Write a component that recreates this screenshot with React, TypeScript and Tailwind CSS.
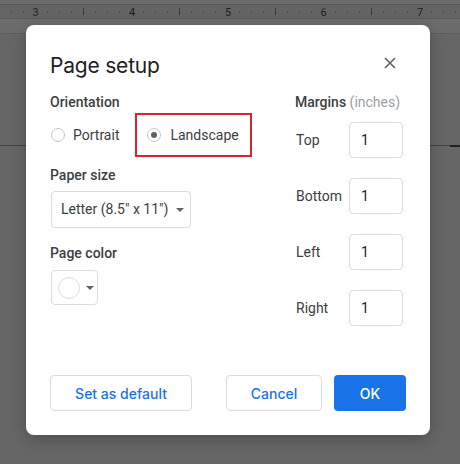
import React from "react";

const ticks: number[] = [];
for (let i = -4; i < 42; i++) ticks.push(i);

function Ruler() {
  const nums = [
    { x: 35.5, n: "3" },
    { x: 132, n: "4" },
    { x: 228, n: "5" },
    { x: 323.5, n: "6" },
    { x: 420, n: "7" },
  ];
  return (
    <svg width="460" height="13" className="block">
      {ticks.map((i) => {
        const x = 35.5 + i * 12;
        const k = ((i % 8) + 8) % 8;
        if (k === 0) return null;
        if (k === 4)
          return <line key={i} x1={x} x2={x} y1={3} y2={10} stroke="#3a3a3a" strokeWidth={1} />;
        return <line key={i} x1={x} x2={x} y1={6} y2={8} stroke="#4a4a4a" strokeWidth={1} />;
      })}
      {nums.map((d) => (
        <text
          key={d.n}
          x={d.x}
          y={11}
          textAnchor="middle"
          fontSize="11"
          fontFamily="Roboto, sans-serif"
          fill="#1e1e1e"
        >
          {d.n}
        </text>
      ))}
    </svg>
  );
}

function Radio({ checked }: { checked?: boolean }) {
  return (
    <span className="flex h-[14px] w-[14px] shrink-0 items-center justify-center rounded-full border-[1.5px] border-[#c4c7ca] bg-white">
      {checked && <span className="h-[6px] w-[6px] rounded-full bg-[#5f6368]" />}
    </span>
  );
}

function Caret() {
  return (
    <svg width="8" height="4" viewBox="0 0 8 4" className="block">
      <path d="M0 0 L8 0 L4 4 Z" fill="#5f6368" />
    </svg>
  );
}

function MarginRow({ label }: { label: string }) {
  return (
    <div className="flex h-[36px] items-center">
      <span className="w-[54px] pl-[1px] text-[14px] text-[#3c4043]">{label}</span>
      <div className="flex h-[36px] w-[54px] items-center rounded-[4px] border border-[#dadce0] pl-[11px] text-[14px] text-[#202124]">
        1
      </div>
    </div>
  );
}

export default function App() {
  return (
    <div
      className="relative h-[464px] w-[460px] overflow-hidden bg-[#666666]"
      style={{ fontFamily: "Roboto, 'Liberation Sans', sans-serif" }}
    >
      <div className="h-[4px] bg-[#6b6b6b]" />
      <div className="h-[1px] bg-[#595959]" />
      <div className="h-[13px] bg-[#646464]">
        <Ruler />
      </div>
      <div className="h-[1px] bg-[#5b5b5b]" />
      <div className="h-[14px] bg-[#6c6c6c]" />
      <div className="h-[1px] bg-[#5e5e5e]" />

      <div className="absolute left-0 top-[145px] h-[1px] w-[460px] bg-[#444444]" />
      <div className="absolute left-[450px] top-[145px] h-[2px] w-[10px] bg-[#222222]" />

      <div className="absolute left-[26px] top-[25px] flex h-[410px] w-[404px] flex-col rounded-[8px] bg-white px-6 pb-6 shadow-[0_4px_16px_rgba(0,0,0,0.25)]">
        <div className="flex items-start justify-between pt-[27px]">
          <h1
            className="h-[28px] text-[21px] leading-[28px] tracking-[-0.2px] text-[#202124]"
            style={{ fontFamily: "Inter, 'Open Sans', sans-serif", fontWeight: 400 }}
          >
            Page setup
          </h1>
          <svg width="12" height="12" viewBox="0 0 12 12" className="mr-[10px] mt-[5px] block">
            <path d="M1 1 L11 11 M11 1 L1 11" stroke="#5f6368" strokeWidth="1.6" />
          </svg>
        </div>

        <div className="mt-[12px] flex">
          <div className="flex w-[245px] flex-col">
            <div className="h-[20px] text-[14px] font-medium leading-[20px] text-[#3c4043]">Orientation</div>
            <div className="mt-[1px] flex h-[44px] items-center">
              <div className="flex items-center pl-[1px]">
                <Radio />
                <span className="ml-[8px] text-[14px] text-[#3c4043]">Portrait</span>
              </div>
              <div className="ml-[16px] flex h-[44px] w-[117px] items-center border-2 border-[#d9232e] pl-[10px]">
                <Radio checked />
                <span className="ml-[9px] text-[14px] text-[#3c4043]">Landscape</span>
              </div>
            </div>
            <div className="mt-[8px] h-[20px] text-[14px] font-medium leading-[20px] text-[#3c4043]">Paper size</div>
            <div className="ml-[1px] mt-[6px] flex h-[37px] w-[140px] items-center rounded-[4px] border border-[#dadce0] pl-[9px]">
              <span className="text-[14px] text-[#3c4043]">Letter (8.5" x 11")</span>
              <span className="ml-[8px]">
                <Caret />
              </span>
            </div>
            <div className="mt-[15px] h-[20px] text-[14px] font-medium leading-[20px] text-[#3c4043]">Page color</div>
            <div className="ml-[1px] mt-[7px] flex h-[35px] w-[47px] items-center rounded-[4px] border border-[#dadce0] pl-[6px]">
              <span className="h-[22px] w-[22px] rounded-full border border-[#dadce0] bg-white" />
              <span className="ml-[6px]">
                <Caret />
              </span>
            </div>
          </div>

          <div className="flex flex-col">
            <div className="h-[20px] text-[14px] leading-[20px]">
              <span className="font-medium text-[#3c4043]">Margins</span>{" "}
              <span className="text-[#9aa0a6]">(inches)</span>
            </div>
            <div className="mt-[10px] flex flex-col gap-[20px]">
              <MarginRow label="Top" />
              <MarginRow label="Bottom" />
              <MarginRow label="Left" />
              <MarginRow label="Right" />
            </div>
          </div>
        </div>

        <div
          className="mt-auto flex items-center justify-between text-[14px] font-medium"
          style={{ fontFamily: "Inter, 'Open Sans', sans-serif" }}
        >
          <button className="flex h-[36px] w-[142px] items-center justify-center rounded-[4px] border border-[#dadce0] bg-white text-[#1a73e8]">
            Set as default
          </button>
          <div className="flex gap-[12px]">
            <button className="flex h-[36px] w-[96px] items-center justify-center rounded-[4px] border border-[#dadce0] bg-white text-[#1a73e8]">
              Cancel
            </button>
            <button className="flex h-[36px] w-[72px] items-center justify-center rounded-[4px] bg-[#1a73e8] text-white">
              OK
            </button>
          </div>
        </div>
      </div>
    </div>
  );
}
